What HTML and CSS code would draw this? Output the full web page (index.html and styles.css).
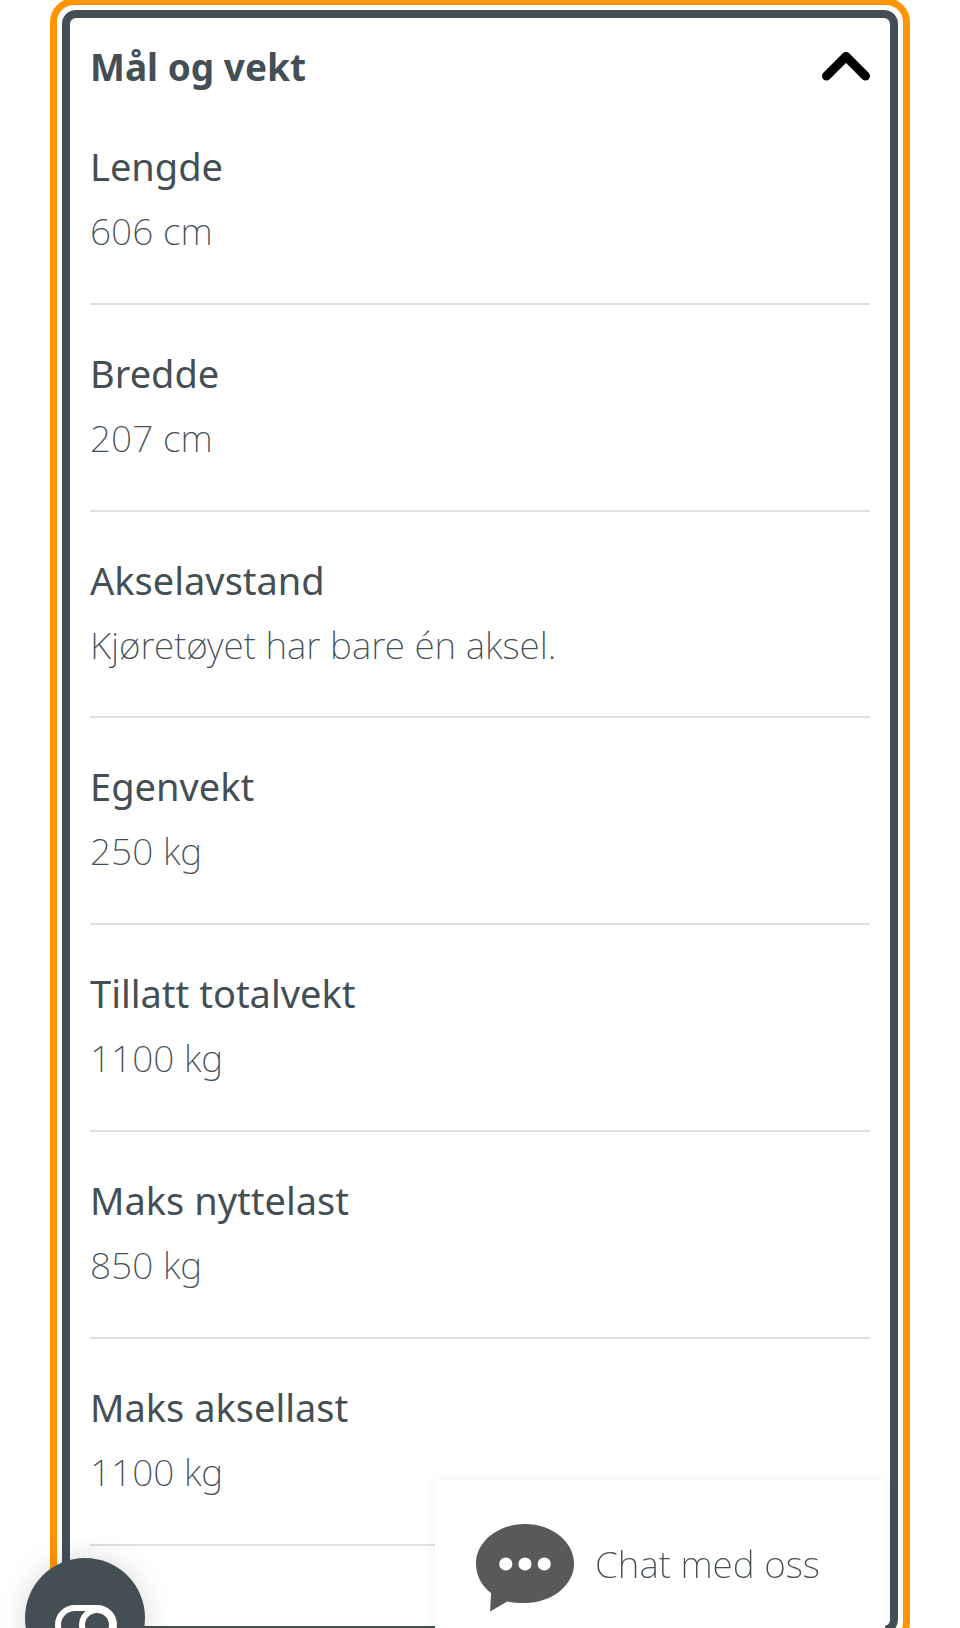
FILE: index.html
```html
<!DOCTYPE html>
<html lang="no">
<head>
<meta charset="utf-8">
<title>Mål og vekt</title>
<link rel="stylesheet" href="styles.css">
</head>
<body>
<main class="focus-ring">
  <section class="panel">
    <header class="panel-head">
      <h2 class="panel-title">Mål og vekt</h2>
      <svg class="chevron" viewBox="0 0 48 30" aria-hidden="true"><path d="M4.500 25 24 5.500 43.500 25"/></svg>
    </header>
    <dl class="specs">
      <div class="spec"><dt>Lengde</dt><dd>606 cm</dd></div>
      <div class="spec"><dt>Bredde</dt><dd>207 cm</dd></div>
      <div class="spec"><dt>Akselavstand</dt><dd>Kjøretøyet har bare én aksel.</dd></div>
      <div class="spec"><dt>Egenvekt</dt><dd>250 kg</dd></div>
      <div class="spec"><dt>Tillatt totalvekt</dt><dd>1100 kg</dd></div>
      <div class="spec"><dt>Maks nyttelast</dt><dd>850 kg</dd></div>
      <div class="spec"><dt>Maks aksellast</dt><dd>1100 kg</dd></div>
    </dl>
  </section>
</main>
<button class="cookie-btn" aria-label="Innstillinger">
  <svg class="toggle" viewBox="0 0 62 40" aria-hidden="true"><rect x="3" y="3" width="56" height="34" rx="17"/><circle cx="42" cy="20" r="15"/></svg>
</button>
<aside class="chat">
  <svg class="chat-icon" viewBox="0 0 97 87" aria-hidden="true">
    <path class="bubble" d="M48.500 0C75 0 97 17.500 97 39C97 60.500 75 78 48.500 78C41 78 36 77.500 31 76.500L14 86.500L15 68.500C5.500 61 0 50.500 0 39C0 17.500 22 0 48.500 0Z"/>
    <circle class="dot" cx="29.500" cy="39.500" r="6.500"/><circle class="dot" cx="48.500" cy="39.500" r="6.500"/><circle class="dot" cx="67.500" cy="39.500" r="6.500"/>
  </svg>
  <span class="chat-label">Chat med oss</span>
</aside>
</body>
</html>
```
FILE: styles.css
```css
html, body {
  margin: 0;
  height: 1628px;
  overflow: hidden;
  background: #fff;
}
body {
  font-family: "Noto Sans", "Liberation Sans", sans-serif;
  color: #444f55;
  padding: 0 50px;
}
.focus-ring {
  margin-top: -2px;
  border: 7px solid #ff9600;
  border-radius: 24px;
  padding: 5px;
}
.panel {
  border: 8px solid #444f55;
  border-radius: 14px;
  padding: 0 20px 80px;
  background: #fff;
}
.panel-head {
  display: flex;
  align-items: center;
  justify-content: space-between;
  height: 78px;
  padding-top: 18px;
  box-sizing: border-box;
  margin-bottom: 2px;
}
.panel-title {
  margin: 0;
  font-size: 37px;
  font-weight: 700;
}
.chevron {
  width: 48px;
  height: 30px;
  fill: none;
  stroke: #000;
  stroke-width: 9;
  stroke-linecap: round;
  stroke-linejoin: round;
}
.specs { margin: 0; }
.spec {
  height: 206.800px;
  box-sizing: border-box;
  border-bottom: 2px solid #dde0e2;
  padding-top: 44px;
}
.spec dt {
  font-size: 38px;
  line-height: 48px;
  font-weight: 400;
}
.spec dd {
  margin: 17px 0 0;
  font-size: 37px;
  line-height: 48px;
  font-weight: 200;
}
.cookie-btn {
  position: fixed;
  left: 25px;
  top: 1558px;
  width: 120px;
  height: 120px;
  padding: 0;
  border: 0;
  border-radius: 50%;
  background: #444f55;
  box-shadow: 0 0 30px rgba(0, 0, 0, .15);
}
.toggle {
  position: absolute;
  left: 30px;
  top: 47px;
  width: 62px;
  height: 40px;
  fill: none;
  stroke: #fff;
  stroke-width: 6;
}
.chat {
  position: fixed;
  left: 435px;
  top: 1480px;
  width: 450px;
  height: 160px;
  display: flex;
  align-items: flex-start;
  gap: 20px;
  padding: 44px 0 0 40px;
  box-sizing: border-box;
  background: #fff;
  box-shadow: 0 0 14px rgba(0, 0, 0, .06);
}
.chat-icon { width: 100px; height: 88px; flex: none; }
.bubble { fill: #58595b; }
.dot { fill: #fff; }
.chat-label {
  font-size: 37px;
  font-weight: 200;
  line-height: 46px;
  margin-top: 17px;
}
```
